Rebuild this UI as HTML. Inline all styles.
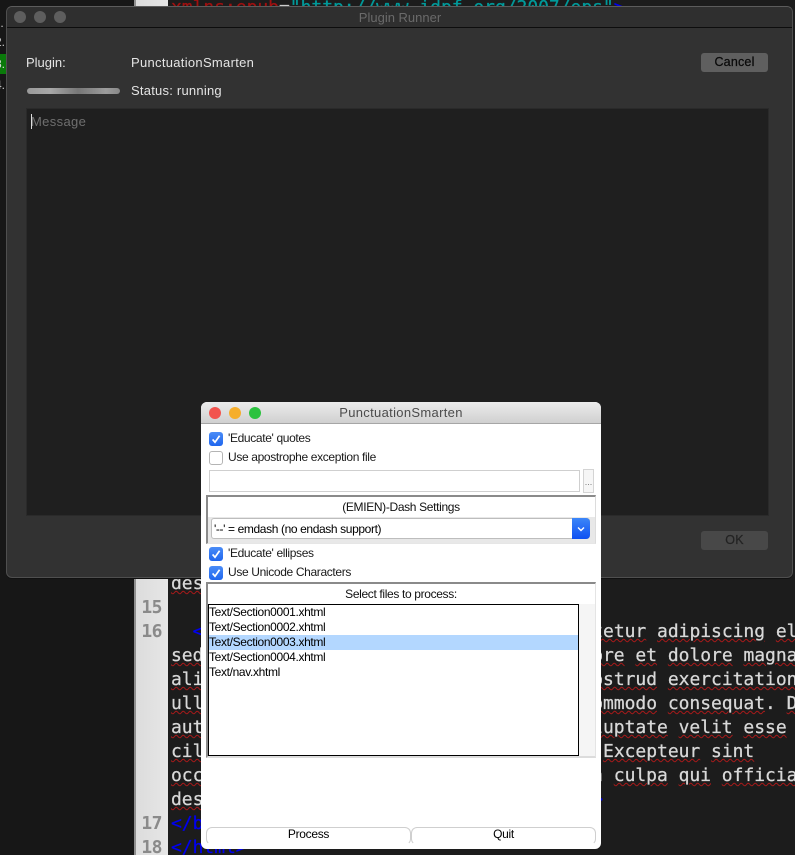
<!DOCTYPE html>
<html><head><meta charset="utf-8"><style>
html,body{margin:0;padding:0;background:#1c1c1c;overflow:hidden;height:855px}
body{width:795px;height:855px;position:relative;overflow:hidden;font-family:"Liberation Sans",sans-serif}
.a{position:absolute}
.t{position:absolute;white-space:nowrap;line-height:16px}
.code{position:absolute;left:171px;white-space:pre;font:18px/24px "DejaVu Sans Mono",monospace;color:#d8d8d8;letter-spacing:-.04px;-webkit-text-stroke:.25px currentColor}
.code u{text-decoration:underline wavy #a81a1a 1px;text-underline-offset:1px}
.num{position:absolute;left:134px;width:28px;text-align:right;font:bold 18px/24px "DejaVu Sans Mono",monospace;color:#8a8a8a;letter-spacing:-.5px}
.blue{color:#0000f0}
.dot{position:absolute;width:12px;height:12px;border-radius:50%}
.cb{position:absolute;left:209px;width:14px;height:14px;border-radius:3px;background:linear-gradient(#4a8cf7,#1f66ee)}
.cb svg{position:absolute;left:0;top:0}
.lab{position:absolute;left:228px;font-size:12px;line-height:14px;color:#1a1a1a;white-space:nowrap;letter-spacing:-.35px}
.it{position:absolute;left:209px;width:369px;height:15px;font-size:12px;line-height:15px;color:#000;letter-spacing:-.35px;white-space:nowrap}
.bt{position:absolute;top:827px;height:16px;border:1px solid #cfcfcf;border-bottom-color:transparent;border-radius:6px;text-align:center;font-size:12px;line-height:12px;color:#000;letter-spacing:-.3px;background:#fff}
</style></head><body>

<div class="a" style="left:0;top:0;width:134px;height:855px;background:#171717"></div>
<div class="a" style="left:134px;top:0;width:2px;height:855px;background:#8f8f8f"></div>
<div class="a" style="left:136px;top:0;width:32px;height:855px;background:linear-gradient(90deg,#dcdcdc,#e6e6e6)"></div>
<div class="a" style="left:0;top:54px;width:6px;height:20px;background:#0a7a0a"></div>
<div class="t" style="left:-3px;top:15px;font-size:12px;color:#ccc">..</div>
<div class="t" style="left:-5px;top:34px;font-size:12px;color:#ccc">2.</div>
<div class="t" style="left:-5px;top:56px;font-size:12px;color:#ddd">3.</div>
<div class="t" style="left:-5px;top:77px;font-size:12px;color:#ccc">4.</div>

<div class="code" style="top:-4px"><span style="color:#a01010">xmlns:epub</span><span style="color:#ccc">=</span><span style="color:#009a9a">"http://www.idpf.org/2007/ops"</span><span class="blue">&gt;</span></div>
<div class="code" style="top:572px"><u>deserunt</u></div>
<div class="num" style="top:596px">15</div>
<div class="num" style="top:620px">16</div>
<div class="code" style="top:620px">  <span class="blue">&lt;p&gt;</span><u>Lorem</u> <u>ipsum</u> <u>dolor</u> sit <u>amet</u>, <u>consectetur</u> <u>adipiscing</u> <u>elit</u>,</div>
<div class="code" style="top:644px"><u>sed</u> do <u>eiusmod</u> <u>tempor</u> <u>incididunt</u> ut <u>labore</u> <u>et</u> <u>dolore</u> <u>magna</u></div>
<div class="code" style="top:668px"><u>aliqua</u>. Ut <u>enim</u> ad <u>minim</u> <u>veniam</u>, <u>quis</u> <u>nostrud</u> <u>exercitation</u></div>
<div class="code" style="top:692px"><u>ullamco</u> <u>laboris</u> <u>nisi</u> ut <u>aliquip</u> ex ea <u>commodo</u> <u>consequat</u>. <u>Duis</u></div>
<div class="code" style="top:716px"><u>aute</u> <u>irure</u> <u>dolor</u> in <u>reprehenderit</u> in <u>voluptate</u> <u>velit</u> <u>esse</u></div>
<div class="code" style="top:740px"><u>cillum</u> <u>dolore</u> eu <u>fugiat</u> <u>nulla</u> <u>pariatur</u>. <u>Excepteur</u> <u>sint</u></div>
<div class="code" style="top:764px"><u>occaecat</u> <u>cupidatat</u> non <u>proident</u>, sunt in <u>culpa</u> <u>qui</u> <u>officia</u></div>
<div class="code" style="top:788px"><u>deserunt</u> <u>mollit</u> <u>anim</u> id est <u>laborum</u>.<span class="blue">&lt;/p&gt;</span></div>
<div class="num" style="top:812px">17</div>
<div class="code blue" style="top:812px">&lt;/body&gt;</div>
<div class="num" style="top:836px">18</div>
<div class="code blue" style="top:836px">&lt;/html&gt;</div>

<!-- Plugin Runner window -->
<div class="a" style="left:6px;top:6px;width:787px;height:572px;box-sizing:border-box;background:#323232;border-radius:6px;border:1px solid #4f4f4f;border-top-color:#5c5c5c;box-shadow:0 1px 0 #111"></div>
<div class="a" style="left:7px;top:27px;width:785px;height:1px;background:#0d0d0d"></div>
<div class="a" style="left:7px;top:7px;width:785px;height:20px;border-radius:5px 5px 0 0;background:#2f2f2f"></div>
<div class="dot" style="left:14px;top:11px;background:#5e5e5e"></div>
<div class="dot" style="left:34px;top:11px;background:#5e5e5e"></div>
<div class="dot" style="left:54px;top:11px;background:#5e5e5e"></div>
<div class="t" style="left:300px;width:200px;top:10px;text-align:center;font-size:13px;color:#6a6a6a">Plugin Runner</div>
<div class="t" style="left:26px;top:55px;font-size:13px;color:#e4e4e4">Plugin:</div>
<div class="t" style="left:131px;top:55px;font-size:13px;color:#e4e4e4;letter-spacing:.3px">PunctuationSmarten</div>
<div class="a" style="left:27px;top:88px;width:93px;height:6px;border-radius:3px;background:linear-gradient(90deg,#9a9a9a,#a8a8a8 25%,#777 55%,#9c9c9c 85%,#888)"></div>
<div class="t" style="left:131px;top:83px;font-size:13px;color:#e4e4e4;letter-spacing:.23px">Status: running</div>
<div class="a" style="left:26px;top:108px;width:743px;height:408px;box-sizing:border-box;background:#1f1f1f;border:1px solid #2a2a2a"></div>
<div class="a" style="left:31px;top:114px;width:1px;height:15px;background:#ddd"></div>
<div class="t" style="left:31px;top:114px;font-size:13px;color:#6f6f6f;letter-spacing:.35px">Message</div>
<div class="a" style="left:701px;top:53px;width:67px;height:19px;border-radius:3px;background:#5f5f5f;text-align:center;font-size:12.5px;line-height:19px;color:#0a0a0a;letter-spacing:.2px;-webkit-text-stroke:.25px #0a0a0a">Cancel</div>
<div class="a" style="left:701px;top:531px;width:67px;height:19px;border-radius:3px;background:#484848;text-align:center;font-size:12.5px;line-height:19px;color:#232323;letter-spacing:.2px;-webkit-text-stroke:.25px #232323">OK</div>

<!-- PunctuationSmarten dialog -->
<div class="a" style="left:201px;top:402px;width:400px;height:447px;background:#fff;border-radius:6px;overflow:hidden">
  <div class="a" style="left:0;top:0;width:400px;height:21px;background:linear-gradient(#ececec,#d0d0d0);border-bottom:1px solid #a6a6a6"></div>
</div>
<div class="dot" style="left:209px;top:407px;background:#f2544e"></div>
<div class="dot" style="left:229px;top:407px;background:#f5ae2c"></div>
<div class="dot" style="left:249px;top:407px;background:#2cc23f"></div>
<div class="t" style="left:301px;width:200px;top:405px;text-align:center;font-size:13px;color:#4c4c4c;letter-spacing:.32px">PunctuationSmarten</div>

<div class="cb" style="top:432px"><svg width="14" height="14"><path d="M3.6 7.4 L6 10.2 L10.6 3.8" fill="none" stroke="#fff" stroke-width="1.7"/></svg></div>
<div class="lab" style="top:431px">'Educate' quotes</div>
<div class="cb" style="top:451px;box-sizing:border-box;background:#fff;border:1px solid #b4b4b4"></div>
<div class="lab" style="top:450px">Use apostrophe exception file</div>
<div class="a" style="left:209px;top:470px;width:371px;height:22px;box-sizing:border-box;border:1px solid #cfcfcf"></div>
<div class="a" style="left:583px;top:469px;width:11px;height:24px;box-sizing:border-box;border:1px solid #d4d4d4;background:#f6f6f6;text-align:center;font-size:9px;line-height:24px;color:#777">...</div>

<div class="a" style="left:206px;top:495px;width:390px;height:49px;box-sizing:border-box;background:#fff;border-top:2px solid #8a8a8a;border-left:2px solid #8a8a8a;border-right:1px solid #dcdcdc;border-bottom:1px solid #e6e6e6"></div>
<div class="a" style="left:208px;top:517px;width:387px;height:26px;background:#e8e8e8"></div>
<div class="t" style="left:206px;width:390px;top:499px;text-align:center;font-size:12px;color:#111;letter-spacing:-.34px">(EMIEN)-Dash Settings</div>
<div class="a" style="left:211px;top:518px;width:379px;height:21px;box-sizing:border-box;background:#fff;border:1px solid #bdbdbd;border-radius:3px"></div>
<div class="t" style="left:214px;top:521px;font-size:12px;color:#000;letter-spacing:-.38px">'--' = emdash (no endash support)</div>
<div class="a" style="left:572px;top:518px;width:18px;height:21px;border-radius:0 4px 4px 0;background:linear-gradient(#3c86f8,#0e50f2)"><svg width="18" height="21" style="position:absolute;left:0;top:0"><path d="M6 9.5 L9 12.5 L12 9.5" fill="none" stroke="#fff" stroke-width="1.4"/></svg></div>

<div class="cb" style="top:547px"><svg width="14" height="14"><path d="M3.6 7.4 L6 10.2 L10.6 3.8" fill="none" stroke="#fff" stroke-width="1.7"/></svg></div>
<div class="lab" style="top:546px">'Educate' ellipses</div>
<div class="cb" style="top:566px"><svg width="14" height="14"><path d="M3.6 7.4 L6 10.2 L10.6 3.8" fill="none" stroke="#fff" stroke-width="1.7"/></svg></div>
<div class="lab" style="top:565px">Use Unicode Characters</div>

<div class="a" style="left:206px;top:582px;width:390px;height:176px;box-sizing:border-box;background:#fff;border-top:2px solid #8a8a8a;border-left:2px solid #8a8a8a;border-right:1px solid #e4e4e4;border-bottom:2px solid #dcdcdc"></div>
<div class="a" style="left:579px;top:604px;width:16px;height:152px;background:#f5f5f5"></div>
<div class="t" style="left:206px;width:390px;top:586px;text-align:center;font-size:12px;color:#111;letter-spacing:-.35px">Select files to process:</div>
<div class="a" style="left:208px;top:604px;width:371px;height:152px;box-sizing:border-box;border:1.5px solid #000;background:#fff"></div>
<div class="a" style="left:209px;top:635px;width:369px;height:15px;background:#b3d7ff"></div>
<div class="it" style="top:605px">Text/Section0001.xhtml</div>
<div class="it" style="top:620px">Text/Section0002.xhtml</div>
<div class="it" style="top:635px">Text/Section0003.xhtml</div>
<div class="it" style="top:650px">Text/Section0004.xhtml</div>
<div class="it" style="top:665px">Text/nav.xhtml</div>

<div class="bt" style="left:206px;width:203px">Process</div>
<div class="bt" style="left:411px;width:183px">Quit</div>
</body></html>
